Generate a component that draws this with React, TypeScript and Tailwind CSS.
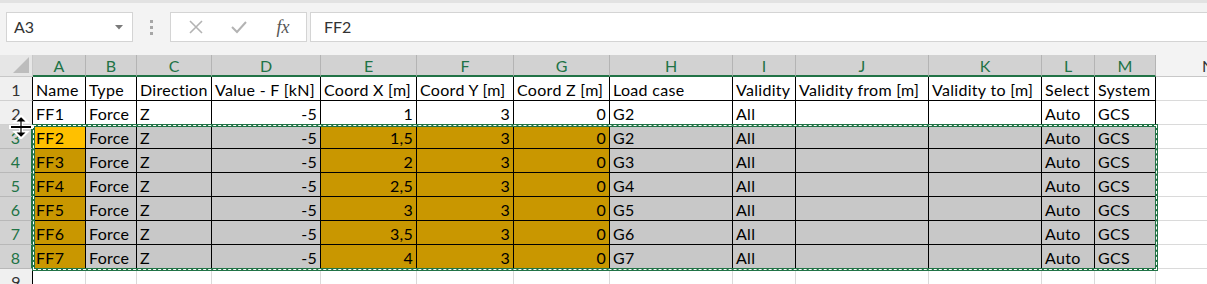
import React from "react";

const colW = [53, 51, 75, 109, 96, 97, 96, 123, 63, 133, 113, 53, 61];
const letters = ["A", "B", "C", "D", "E", "F", "G", "H", "I", "J", "K", "L", "M"];
const header = [
  "Name",
  "Type",
  "Direction",
  "Value - F [kN]",
  "Coord X [m]",
  "Coord Y [m]",
  "Coord Z [m]",
  "Load case",
  "Validity",
  "Validity from [m]",
  "Validity to [m]",
  "Select",
  "System",
];
const xs = ["1", "1,5", "2", "2,5", "3", "3,5", "4"];
const rightCols = new Set([3, 4, 5, 6]);

function rowData(i: number): string[] {
  return [`FF${i + 1}`, "Force", "Z", "-5", xs[i], "3", "0", `G${i === 0 ? 2 : i + 1}`, "All", "", "", "Auto", "GCS"];
}

function Cursor() {
  return (
    <svg width="24" height="24" viewBox="0 0 24 24" className="absolute left-[9px] top-[115px]">
      <g stroke="white" strokeWidth="4" strokeLinecap="square" fill="white">
        <line x1="12" y1="4" x2="12" y2="20" />
        <line x1="2" y1="12" x2="22" y2="12" />
        <path d="M12 2 L16 6 L8 6 Z" />
        <path d="M12 22 L16 18 L8 18 Z" />
      </g>
      <g stroke="black" strokeWidth="1.2" fill="black">
        <line x1="12" y1="4" x2="12" y2="20" />
        <path d="M12 3 L15 6 L9 6 Z" />
        <path d="M12 21 L15 18 L9 18 Z" />
      </g>
      <rect x="2" y="11" width="20" height="2" fill="black" />
    </svg>
  );
}

export default function App() {
  const font = { fontFamily: "Lato, 'Open Sans', sans-serif" };
  const rows: React.ReactNode[] = [];

  rows.push(
    <div key="h" className="flex h-[22px]">
      <div className="w-[33px] shrink-0 h-full bg-[#e6e6e6] border-r border-b border-[#c8c8c8] relative">
        <svg width="16" height="16" className="absolute right-[3px] bottom-[3px]">
          <path d="M16 0 L16 16 L0 16 Z" fill="#bdbdbd" />
        </svg>
      </div>
      {letters.map((l, i) => (
        <div
          key={l}
          style={{ width: colW[i] }}
          className="shrink-0 h-full bg-[#d2d2d2] border-r border-r-[#b4b4b4] border-b-2 border-b-[#217346] flex items-center justify-center text-[16px] text-[#217346] pt-[1px]"
        >
          {l}
        </div>
      ))}
      <div className="flex-1 h-full bg-[#f3f3f3] border-b border-[#c8c8c8] flex items-center pl-[46px] text-[16px] text-[#333]">
        N
      </div>
    </div>
  );

  for (let r = 1; r <= 9; r++) {
    const selected = r >= 3 && r <= 8;
    const inTable = r <= 8;
    let cells: string[] = [];
    if (r === 1) cells = header;
    else if (r <= 8) cells = rowData(r - 2);
    else cells = Array(13).fill("");
    rows.push(
      <div key={r} className="flex h-[24px]">
        <div
          className={
            "w-[33px] shrink-0 h-full flex items-center justify-center text-[16px] border-b pt-[2px] " +
            (selected
              ? "bg-[#d2d2d2] text-[#217346] border-b-[#b8b8b8] border-r-2 border-r-[#217346]"
              : "bg-[#f0f0f0] text-[#333] border-b-[#d0d0d0] border-r border-r-[#000]")
          }
        >
          {r}
        </div>
        {cells.map((c, i) => {
          const orange = selected && (i === 0 || i === 4 || i === 5 || i === 6);
          const active = r === 3 && i === 0;
          let bg = "bg-white";
          if (active) bg = "bg-[#ffc000]";
          else if (orange) bg = "bg-[#c99700]";
          else if (selected) bg = "bg-[#c8c8c8]";
          const border = inTable ? "border-black" : "border-[#dadada]";
          const align = r > 1 && rightCols.has(i) ? "justify-end pr-[3px]" : "justify-start pl-[3px]";
          return (
            <div
              key={i}
              style={{ width: colW[i] }}
              className={`shrink-0 h-full border-r border-b ${border} ${bg} flex items-center ${align} text-[16px] tracking-[0.3px] text-black whitespace-nowrap overflow-hidden pt-[2px]`}
            >
              {c}
            </div>
          );
        })}
        <div className="flex-1 h-full bg-white border-b border-[#dadada]" />
      </div>
    );
  }

  return (
    <div className="w-[1207px] h-[284px] overflow-hidden bg-white relative" style={font}>
      <div className="h-[55px] bg-[#f3f3f3]">
        <div className="h-[3px] bg-[#e2e2e2]" />
        <div className="flex items-start pt-[9px]">
          <div className="ml-[6px] w-[127px] h-[30px] bg-white border border-[#d4d4d4] flex items-center justify-between pl-[7px] pr-[9px] text-[16px] text-[#333]">
            <span>A3</span>
            <svg width="8" height="5" viewBox="0 0 8 5">
              <path d="M0 0 L8 0 L4 4.5 Z" fill="#7a7a7a" />
            </svg>
          </div>
          <div className="w-[37px] h-[30px] flex flex-col items-center justify-center gap-[3px]">
            <div className="w-[3px] h-[3px] bg-[#a6a6a6]" />
            <div className="w-[3px] h-[3px] bg-[#a6a6a6]" />
            <div className="w-[3px] h-[3px] bg-[#a6a6a6]" />
          </div>
          <div className="w-[137px] h-[30px] bg-white border border-[#d4d4d4] flex items-center">
            <div className="w-[46px] flex justify-center pl-[3px]">
              <svg width="14" height="14" viewBox="0 0 14 14">
                <path d="M1 1 L13 13 M13 1 L1 13" stroke="#b3b3b3" strokeWidth="1.6" />
              </svg>
            </div>
            <div className="w-[44px] flex justify-center">
              <svg width="16" height="14" viewBox="0 0 16 14">
                <path d="M1 7 L6 12 L15 2" stroke="#b3b3b3" strokeWidth="2" fill="none" />
              </svg>
            </div>
            <div className="w-[44px] flex justify-center">
              <span
                className="text-[18px] italic text-[#555] leading-none"
                style={{ fontFamily: "'Liberation Serif', serif" }}
              >
                fx
              </span>
            </div>
          </div>
          <div className="ml-[3px] flex-1 h-[30px] bg-white border border-[#d4d4d4] border-r-0 flex items-center pl-[13px] text-[16px] text-[#333]">
            FF2
          </div>
        </div>
      </div>
      <div>{rows}</div>
      <div className="absolute left-[32px] top-[124px] w-[1126px] h-[147px] border-[3px] border-[#217346]">
        <div className="absolute -inset-[2px] border border-dashed border-white" />
      </div>
      <Cursor />
    </div>
  );
}
